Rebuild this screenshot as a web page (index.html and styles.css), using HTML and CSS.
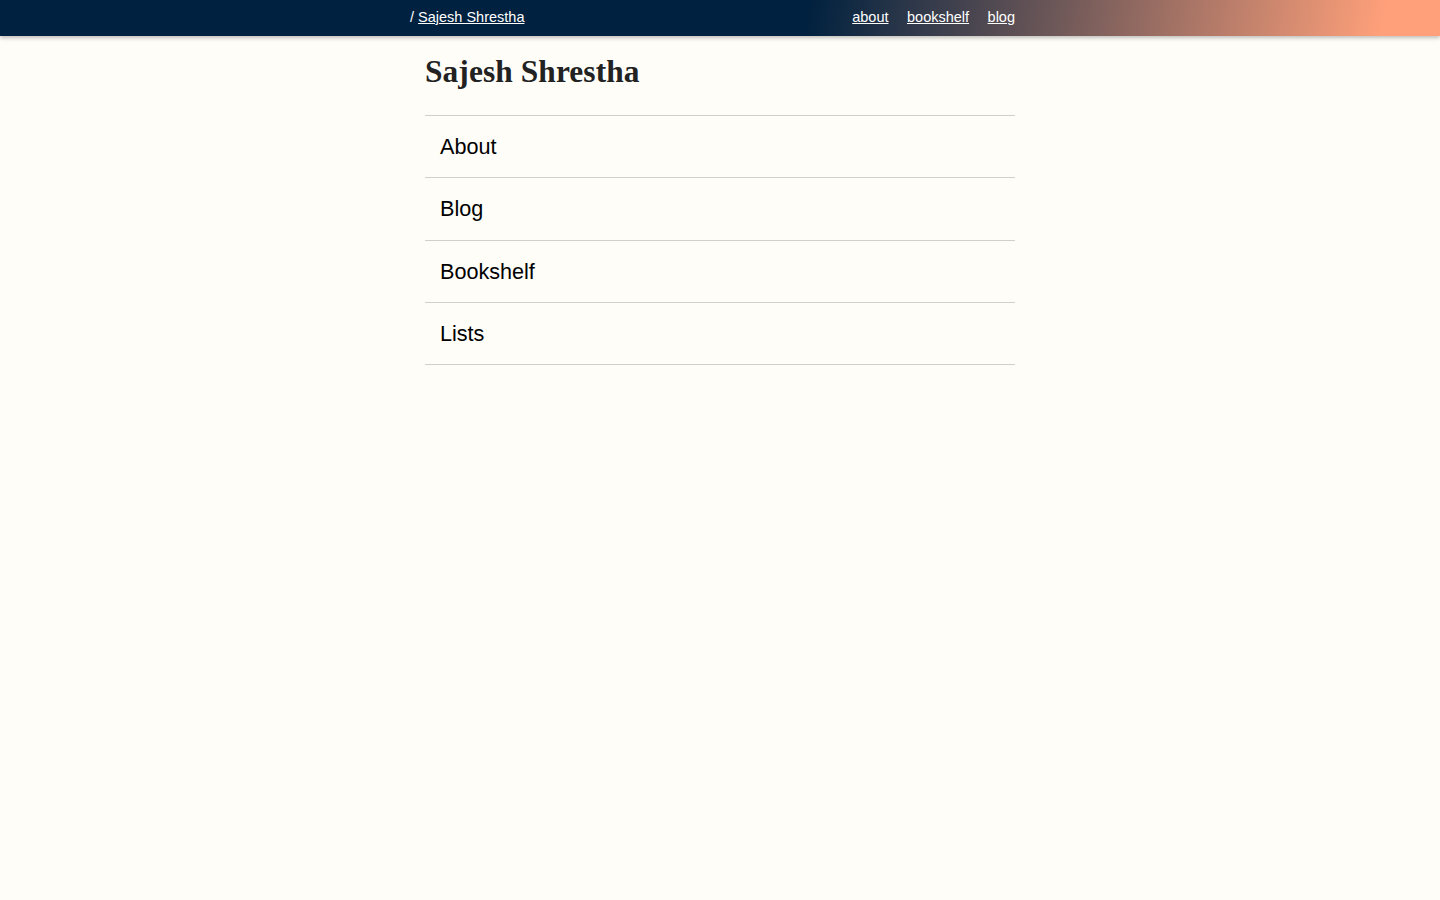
FILE: index.html
```html
<!DOCTYPE html>
<html lang="en">
<head>
<meta charset="utf-8">
<title>Sajesh Shrestha</title>
<link rel="stylesheet" href="styles.css">
</head>
<body>
<header class="topbar">
  <div class="topbar-inner">
    <nav class="crumbs">/ <a href="#">Sajesh Shrestha</a></nav>
    <nav class="toplinks">
      <a href="#">about</a>
      <a href="#">bookshelf</a>
      <a href="#">blog</a>
    </nav>
  </div>
</header>
<main class="content">
  <h1 class="title">Sajesh Shrestha</h1>
  <ul class="index">
    <li class="index-item"><a href="#">About</a></li>
    <li class="index-item"><a href="#">Blog</a></li>
    <li class="index-item"><a href="#">Bookshelf</a></li>
    <li class="index-item"><a href="#">Lists</a></li>
  </ul>
</main>
</body>
</html>
```
FILE: styles.css
```css
html, body {
  margin: 0;
  padding: 0;
}
body {
  background: #fefdf8;
  font-family: "Liberation Sans", Arial, sans-serif;
  color: #111;
  min-height: 900px;
}
.topbar {
  height: 36px;
  background: linear-gradient(100deg, #00213f 56%, #ffa07a 96%);
  box-shadow: 0 2px 4px rgba(0, 0, 0, 0.25);
}
.topbar-inner {
  box-sizing: border-box;
  width: 620px;
  margin: 0 auto;
  padding-right: 15px;
  height: 36px;
  display: flex;
  align-items: center;
  justify-content: space-between;
  font-size: 14.5px;
  color: #fff;
  padding-bottom: 2px;
}
.topbar a {
  color: #fff;
  text-decoration: underline;
}
.toplinks {
  display: flex;
  gap: 18.5px;
}
.content {
  width: 590px;
  margin: 0 auto;
}
.title {
  font-family: "Liberation Serif", "Times New Roman", serif;
  font-weight: bold;
  font-size: 31.4px;
  color: #222;
  margin: 0;
  padding: 18px 0 0 0;
  height: 61px;
  letter-spacing: 0.1px;
}
.index {
  list-style: none;
  margin: 0;
  padding: 0;
  border-top: 1px solid #d0d0cc;
}
.index-item {
  border-bottom: 1px solid #d0d0cc;
  padding: 18px 15px;
  font-size: 21.6px;
  line-height: 25.25px;
}
.index-item a {
  color: #000;
  text-decoration: none;
}
```
